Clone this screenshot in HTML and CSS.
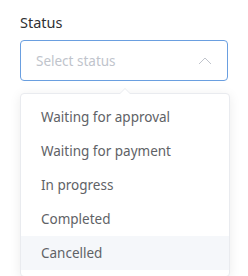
FILE: index.html
```html
<!DOCTYPE html>
<html lang="en">
<head>
<meta charset="utf-8">
<link rel="stylesheet" href="styles.css">
</head>
<body>
<div class="field">
  <div class="label">Status</div>
  <div class="select">
    <div class="input">
      <span class="placeholder">Select status</span>
      <svg class="chevron" width="14" height="12" viewBox="0 0 14 12"><path d="M1 9 L7 3 L13 9" fill="none" stroke="#c0c4cc" stroke-width="1"/></svg>
    </div>
    <div class="dropdown">
      <span class="arrow"></span>
      <ul class="list">
        <li class="item">Waiting for approval</li>
        <li class="item">Waiting for payment</li>
        <li class="item">In progress</li>
        <li class="item">Completed</li>
        <li class="item hover">Cancelled</li>
      </ul>
    </div>
  </div>
</div>
</body>
</html>
```
FILE: styles.css
```css
html, body {
  margin: 0;
  padding: 0;
  background: #fff;
}
body {
  font-family: "Noto Sans", "Open Sans", sans-serif;
  font-size: 14px;
}
.field {
  padding: 12px 20px 0 20px;
  width: 208px;
}
.label {
  color: #303133;
  font-size: 14.5px;
  line-height: 20px;
  margin-bottom: 8px;
}
.select {
  position: relative;
}
.input {
  box-sizing: border-box;
  height: 41px;
  border: 1px solid #6a9fe0;
  border-radius: 4px;
  padding: 0 15px;
  display: flex;
  align-items: center;
  justify-content: space-between;
}
.placeholder {
  color: #c0c4cc;
  font-size: 13.5px;
}
.dropdown {
  position: relative;
  margin-top: 12px;
  width: 210px;
  box-sizing: border-box;
  border: 1px solid #e9ebef;
  border-radius: 4px;
  background: #fff;
  box-shadow: 0 2px 12px 0 rgba(0, 0, 0, 0.08);
}
.arrow {
  position: absolute;
  top: -6px;
  left: 98px;
  width: 0;
  height: 0;
  border-left: 6px solid transparent;
  border-right: 6px solid transparent;
  border-bottom: 6px solid #e9ebef;
}
.arrow::after {
  content: "";
  position: absolute;
  left: -6px;
  top: 1px;
  border-left: 6px solid transparent;
  border-right: 6px solid transparent;
  border-bottom: 6px solid #fff;
}
.list {
  list-style: none;
  margin: 0;
  padding: 6px 0;
}
.item {
  height: 34px;
  line-height: 34px;
  padding: 0 20px;
  color: #606266;
  font-size: 13.5px;
}
.item.hover {
  background: #f5f7fa;
}
```
